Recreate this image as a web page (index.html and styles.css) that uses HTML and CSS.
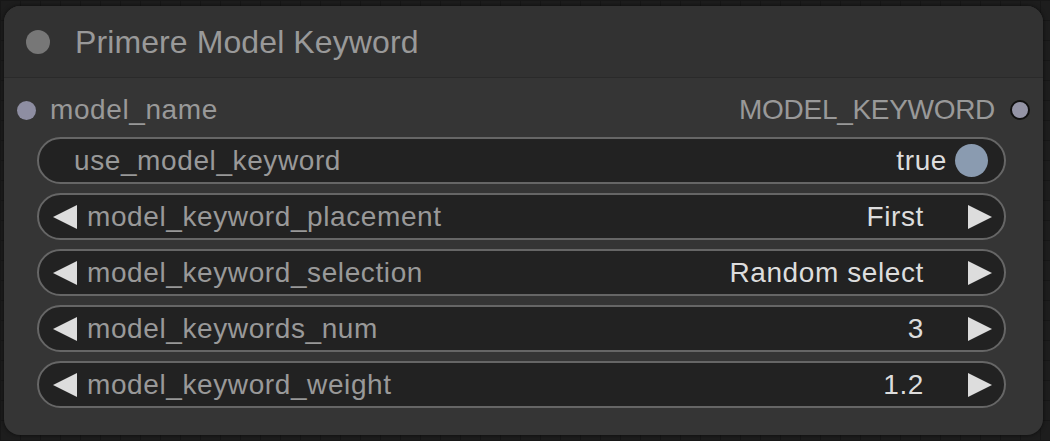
FILE: index.html
```html
<!DOCTYPE html>
<html>
<head>
<meta charset="utf-8">
<link rel="stylesheet" href="styles.css">
</head>
<body>
<div class="node">
  <div class="title">
    <span class="title-dot"></span>
    <span class="title-text">Primere Model Keyword</span>
  </div>
  <div class="slots">
    <div class="slot-in"><span class="dot-in"></span><span class="slot-label">model_name</span></div>
    <div class="slot-out"><span class="slot-label">MODEL_KEYWORD</span><span class="dot-out"></span></div>
  </div>
  <div class="widgets">
    <div class="widget toggle">
      <span class="label">use_model_keyword</span>
      <span class="value">true</span>
      <span class="knob"></span>
    </div>
    <div class="widget combo">
      <span class="arrow-left"></span>
      <span class="label">model_keyword_placement</span>
      <span class="value">First</span>
      <span class="arrow-right"></span>
    </div>
    <div class="widget combo">
      <span class="arrow-left"></span>
      <span class="label">model_keyword_selection</span>
      <span class="value">Random select</span>
      <span class="arrow-right"></span>
    </div>
    <div class="widget combo">
      <span class="arrow-left"></span>
      <span class="label">model_keywords_num</span>
      <span class="value">3</span>
      <span class="arrow-right"></span>
    </div>
    <div class="widget combo">
      <span class="arrow-left"></span>
      <span class="label">model_keyword_weight</span>
      <span class="value">1.2</span>
      <span class="arrow-right"></span>
    </div>
  </div>
</div>
</body>
</html>
```
FILE: styles.css
```css
html, body {
  margin: 0;
  padding: 0;
}
body {
  width: 1050px;
  height: 441px;
  overflow: hidden;
  background-color: #1d1d1d;
  background-image:
    linear-gradient(#171717 1px, transparent 1px),
    linear-gradient(90deg, #171717 1px, transparent 1px);
  background-size: 20px 20px;
  font-family: "Liberation Sans", Arial, sans-serif;
  padding-top: 6px;
  box-sizing: border-box;
}
.node {
  margin-left: 4px;
  width: 1039px;
  height: 429px;
  box-sizing: border-box;
  background: #353535;
  border-radius: 16px;
  box-shadow: 0 0 4px rgba(0,0,0,0.6);
  overflow: hidden;
  display: flex;
  flex-direction: column;
}
.title {
  height: 72px;
  flex: none;
  box-sizing: border-box;
  background: #323232;
  border-bottom: 1px solid #2a2a2a;
  display: flex;
  align-items: center;
  padding-left: 22px;
  gap: 25px;
}
.title-dot {
  width: 24px;
  height: 24px;
  border-radius: 50%;
  background: #777;
  flex: none;
}
.title-text {
  color: #999;
  font-size: 32px;
  letter-spacing: 0.1px;
  position: relative;
  top: 1px;
}
.slots {
  display: flex;
  justify-content: space-between;
  align-items: center;
  height: 46px;
  margin-top: 9px;
  padding: 0 13px;
  flex: none;
}
.slot-in, .slot-out {
  display: flex;
  align-items: center;
}
.slot-in { gap: 14px; }
.slot-out { gap: 15px; }
.slot-label {
  color: #999;
  font-size: 28px;
  letter-spacing: 0.6px;
}
.slot-out .slot-label { letter-spacing: -0.3px; }
.dot-in {
  width: 19px;
  height: 19px;
  border-radius: 50%;
  background: #8e8ea2;
}
.dot-out {
  width: 16px;
  height: 16px;
  border-radius: 50%;
  background: #9494a6;
  border: 2px solid #111;
}
.widgets {
  display: flex;
  flex-direction: column;
  gap: 9px;
  padding: 4px 37px 0 33px;
}
.widget {
  height: 47px;
  box-sizing: border-box;
  border: 2px solid #666;
  border-radius: 24px;
  background: #222;
  display: flex;
  align-items: center;
  font-size: 28px;
  letter-spacing: 0.6px;
}
.label {
  color: #999;
  flex: 1;
}
.value {
  color: #ddd;
}
.toggle {
  padding-left: 35px;
  padding-right: 16px;
}
.toggle .value {
  margin-right: 8px;
}
.knob {
  width: 33px;
  height: 33px;
  border-radius: 50%;
  background: #8a9bb0;
}
.combo {
  padding-left: 14px;
  padding-right: 12px;
}
.arrow-left {
  width: 0;
  height: 0;
  border-top: 12px solid transparent;
  border-bottom: 12px solid transparent;
  border-right: 24px solid #ddd;
  margin-right: 10px;
}
.arrow-right {
  width: 0;
  height: 0;
  border-top: 12px solid transparent;
  border-bottom: 12px solid transparent;
  border-left: 24px solid #ddd;
  margin-left: 44px;
}
```
